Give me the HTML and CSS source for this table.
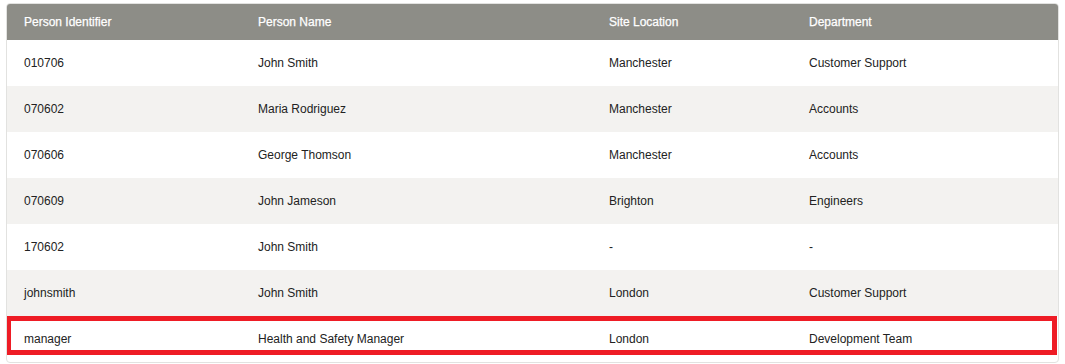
FILE: index.html
```html
<!DOCTYPE html>
<html lang="en">
<head>
<meta charset="utf-8">
<title>People</title>
<link rel="stylesheet" href="styles.css">
</head>
<body>
<div class="panel">
  <table class="grid">
    <colgroup>
      <col class="c1"><col class="c2"><col class="c3"><col class="c4">
    </colgroup>
    <thead>
      <tr><th>Person Identifier</th><th>Person Name</th><th>Site Location</th><th>Department</th></tr>
    </thead>
    <tbody>
      <tr><td>010706</td><td>John Smith</td><td>Manchester</td><td>Customer Support</td></tr>
      <tr><td>070602</td><td>Maria Rodriguez</td><td>Manchester</td><td>Accounts</td></tr>
      <tr><td>070606</td><td>George Thomson</td><td>Manchester</td><td>Accounts</td></tr>
      <tr><td>070609</td><td>John Jameson</td><td>Brighton</td><td>Engineers</td></tr>
      <tr><td>170602</td><td>John Smith</td><td>-</td><td>-</td></tr>
      <tr><td>johnsmith</td><td>John Smith</td><td>London</td><td>Customer Support</td></tr>
      <tr><td>manager</td><td>Health and Safety Manager</td><td>London</td><td>Development Team</td></tr>
    </tbody>
  </table>
  <div class="highlight"></div>
</div>
</body>
</html>
```

FILE: styles.css
```css
html, body {
  margin: 0;
  padding: 0;
  background: #ffffff;
}
body {
  padding: 3px 6px 0 6px;
  font-family: "Liberation Sans", Arial, sans-serif;
  font-size: 12px;
  color: #222222;
}
.panel {
  position: relative;
  border: 1px solid #e2e2e0;
  border-radius: 4px;
  overflow: hidden;
}
.grid {
  width: 100%;
  border-collapse: collapse;
  table-layout: fixed;
}
.c1 { width: 234px; }
.c2 { width: 351px; }
.c3 { width: 200px; }
.c4 { width: auto; }
.grid th {
  background: #8d8d87;
  color: #ffffff;
  font-weight: normal;
  text-align: left;
  height: 36px;
  padding: 0 0 0 17px;
  -webkit-text-stroke: 0.25px #ffffff;
}
.grid td {
  height: 46px;
  padding: 0 0 0 17px;
}
.grid tbody tr:nth-child(even) td {
  background: #f3f2f0;
}
.highlight {
  position: absolute;
  left: -1px;
  right: 1px;
  bottom: 7px;
  height: 39px;
  border: 5px solid #ee1c25;
  box-sizing: border-box;
  pointer-events: none;
}
```
